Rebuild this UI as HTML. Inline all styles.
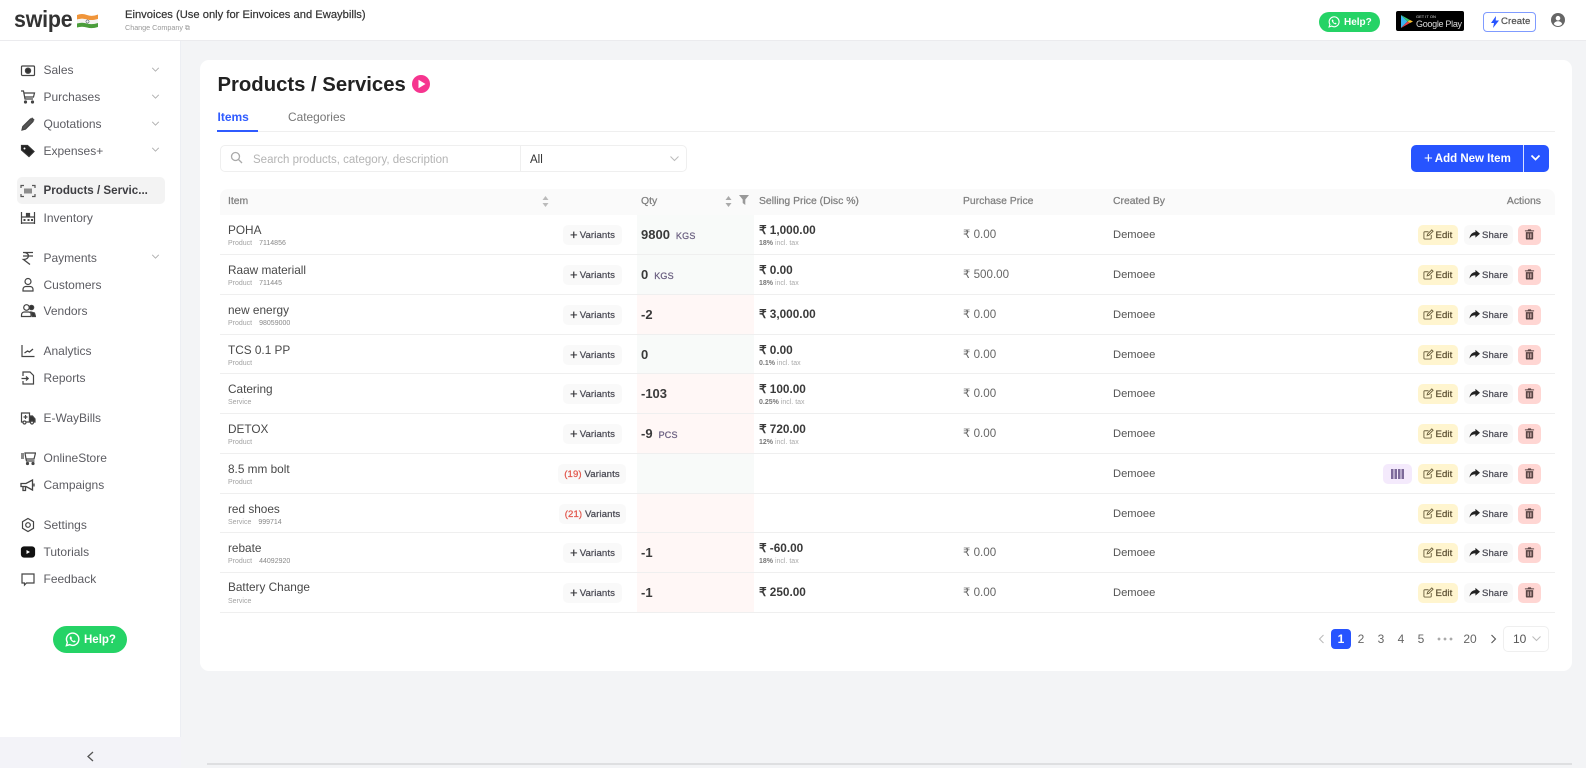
<!DOCTYPE html>
<html lang="en"><head><meta charset="utf-8"><title>Products / Services</title>
<style>
*{box-sizing:border-box}
html,body{margin:0;padding:0;width:1586px;height:768px;overflow:hidden;background:#f3f4f6;font-family:"Liberation Sans",sans-serif;color:#333}
#w{position:absolute;left:0;top:0;width:1586px;height:768px;overflow:hidden;background:#f3f4f6;filter:blur(.3px)}
.a{position:absolute;white-space:nowrap}
#top{position:absolute;left:0;top:0;width:1586px;height:41px;background:#fff;border-bottom:1px solid #ebebee}
#side{position:absolute;left:0;top:41px;width:181px;height:727px;background:#fff;border-right:1px solid #eceef3}
.m{position:absolute;left:43.5px;font-size:12px;line-height:16px;color:#5c5c62;white-space:nowrap}
.i{position:absolute;left:20px;width:16px;height:16px;fill:none;stroke:#444;stroke-width:1.2}
.c{position:absolute;left:151px;width:9px;height:9px;fill:none;stroke:#aaa;stroke-width:1.1}
#card{position:absolute;left:200px;top:60px;width:1372px;height:611px;background:#fff;border-radius:9px}
.r{position:absolute;left:220px;width:1335px;height:40px;border-bottom:1px solid #efefef}
.h39{height:39px}
.q{position:absolute;left:417px;top:0;width:117px;height:100%}
.g{background:#f8faf9}.p{background:#fff7f6}
.n{position:absolute;left:8px;top:8px;font-size:11.8px;line-height:15px;color:#484848;white-space:nowrap}
.s{position:absolute;left:8px;top:24px;font-size:7px;line-height:9px;color:#a2a2a2;white-space:nowrap}
.s b{font-weight:400;margin-left:7px;color:#888}
.v{position:absolute;left:343px;top:10px;width:59px;height:20px;border-radius:5px;background:#f9f9f9;font-size:9.6px;line-height:22px;color:#4b4b55;-webkit-text-stroke:.25px #4b4b55;letter-spacing:.1px;text-align:center;white-space:nowrap}
.v u{text-decoration:none;font-size:13px;line-height:0;margin-right:2px;position:relative;top:1px;color:#333}
.v i{font-style:normal;color:#e2574c;-webkit-text-stroke:.25px #e2574c}
.qt{position:absolute;left:421px;top:12px;font-size:13px;line-height:16px;font-weight:700;color:#3a3a3a;white-space:nowrap}
.qt small{font-size:9px;font-weight:400;-webkit-text-stroke:.25px #6a5f80;color:#6a5f80;margin-left:6px;letter-spacing:.2px}
.pr{position:absolute;left:539px;top:8px;font-size:11.8px;line-height:15px;font-weight:700;color:#3a3a3a;white-space:nowrap}
.pr.o{top:12px}
.tx{position:absolute;left:539px;top:24px;font-size:7px;line-height:9px;color:#aaa;white-space:nowrap}
.tx b{color:#777}
.pu{position:absolute;left:743px;top:12px;font-size:11.6px;line-height:16px;color:#666;white-space:nowrap}
.cb{position:absolute;left:893px;top:12px;font-size:11.2px;line-height:16px;color:#555;white-space:nowrap}
.e,.h,.d,.b{position:absolute;top:10px;height:20px;border-radius:5px;font-size:9.6px;line-height:21px;white-space:nowrap}
.e{left:1198px;width:40px;background:#fff5cf;color:#5f5335;padding-left:17.5px;-webkit-text-stroke:.25px #5f5335;letter-spacing:.1px}
.h{left:1244px;width:49px;background:#f9f9f9;color:#4e4e58;padding-left:18px;-webkit-text-stroke:.25px #4e4e58;letter-spacing:.1px}
.d{left:1298px;width:23px;background:#ffd6d3}
.b{left:1163px;width:29px;background:#f4eafc}
.e svg,.h svg,.d svg,.b svg{position:absolute}
.th{position:absolute;top:6px;font-size:10.4px;line-height:14px;color:#7f7f7f;-webkit-text-stroke:.25px #7f7f7f;white-space:nowrap}
.pg{position:absolute;top:631px;font-size:12px;line-height:16px;color:#666;width:20px;text-align:center}
</style></head><body>
<div id="w">
<svg width="0" height="0" style="position:absolute"><defs>
<symbol id="ed" viewBox="0 0 12 12"><path d="M9 6.5V10a1 1 0 0 1-1 1H2a1 1 0 0 1-1-1V4a1 1 0 0 1 1-1h4" fill="none" stroke="#6b5f3d" stroke-width="1"/><path d="M4.5 7.5l.4-1.8L9.6 1l1.4 1.4-4.7 4.7z" fill="none" stroke="#6b5f3d" stroke-width="1"/></symbol>
<symbol id="sh" viewBox="0 0 12 12"><path d="M7 1l5 4.2L7 9.4V7C4 7 2 7.8.6 10.6.8 6.6 3 3.6 7 3.4z" fill="#222"/></symbol>
<symbol id="tr" viewBox="0 0 12 12"><path d="M4.5 1h3l.5 1h3v1.2H1V2h3zM2 4h8v7a1 1 0 0 1-1 1H3a1 1 0 0 1-1-1zm2 1.5v5h1v-5zm3 0v5h1v-5z" fill="#5a4545" fill-rule="evenodd"/></symbol>
<symbol id="wa" viewBox="0 0 16 16"><path d="M1.5 14.5l1-3.4A6.6 6.6 0 1 1 5 13.5z" fill="none" stroke="#fff" stroke-width="1.5"/><path d="M5.6 4.8c-.8.7-.8 1.8.1 3.2.9 1.5 2.1 2.5 3.5 3 1.1.3 2-.2 2.3-1.1l-1.700-1-.8.7c-.9-.4-1.700-1.200-2.100-2.100l.6-.8-.9-1.900z" fill="#fff"/></symbol>
<symbol id="dn" viewBox="0 0 11 11"><path d="M1.500 3.500l4 4 4-4"/></symbol>
</defs></svg>

<div id="top">
<div class="a" style="left:14px;top:5px;font-size:23px;line-height:28px;font-weight:700;color:#333;transform:scaleX(.93);transform-origin:left;letter-spacing:-.2px">swipe</div>
<svg class="a" style="left:77px;top:13px" width="21" height="16" viewBox="0 0 21 16"><path d="M0 2q5-2 10 0t11-.5V6q-6 2-11 .5T0 6.500z" fill="#f0953a"/><path d="M0 6.500q5-1.500 10 0T21 6v4q-6 2-11 .5T0 10.500z" fill="#f4f4f2"/><path d="M0 10.500q5-1.500 10 0t11-.5v4q-6 2-11 .500T0 14.500z" fill="#4b9d3b"/><circle cx="10.500" cy="8.500" r="1.600" fill="none" stroke="#345" stroke-width=".5"/></svg>
<div class="a" style="left:125px;top:8px;font-size:11.2px;line-height:14px;color:#333;-webkit-text-stroke:.2px #333">Einvoices (Use only for Einvoices and Ewaybills)</div>
<div class="a" style="left:125px;top:23px;font-size:7.2px;line-height:9px;color:#999">Change Company ⧉</div>
<div class="a" style="left:1319px;top:12px;width:61px;height:20px;border-radius:10px;background:#25d366;color:#fff;font-size:10px;font-weight:700;line-height:21px;padding-left:25px">Help?<svg class="a" style="left:9px;top:4px" width="12" height="12"><use href="#wa"/></svg></div>
<div class="a" style="left:1396px;top:11px;width:68px;height:20px;border-radius:2px;background:#000;color:#ddd"><svg class="a" style="left:5px;top:3.5px" width="12" height="13" viewBox="0 0 12 13"><path d="M0 0l6.500 6.500L0 13z" fill="#3cb4f0"/><path d="M0 0l9 5-2.500 1.500z" fill="#36c46a"/><path d="M0 13l9-5-2.500-1.500z" fill="#e8404a"/><path d="M9 5l3 1.500L9 8 6.500 6.500z" fill="#fbc02d"/></svg><span class="a" style="left:20px;top:3px;font-size:4px;line-height:5px">GET IT ON</span><span class="a" style="left:20px;top:7.5px;font-size:9px;line-height:11px;letter-spacing:-.3px">Google Play</span></div>
<div class="a" style="left:1483px;top:12px;width:53px;height:20px;border-radius:4px;background:#fff;border:1px solid #7f9bff;color:#555;font-size:9.6px;-webkit-text-stroke:.25px #555;line-height:18px;padding-left:17px;letter-spacing:.1px">Create<svg class="a" style="left:7px;top:3px" width="8" height="12" viewBox="0 0 8 12"><path d="M5 0L0 7h3l-1 5 6-7.500H4.700z" fill="#2754ff"/></svg></div>
<svg class="a" style="left:1551px;top:13px" width="14" height="14" viewBox="0 0 14 14"><circle cx="7" cy="7" r="7" fill="#666"/><circle cx="7" cy="5.200" r="2.300" fill="#fff"/><path d="M2.800 11c.8-2 2.400-2.700 4.200-2.700s3.400.7 4.200 2.700A6 6 0 0 1 7 13a6 6 0 0 1-4.200-2z" fill="#fff"/></svg>
</div>

<div id="side"></div>
<div class="a" style="left:17px;top:177px;width:148px;height:27px;background:#f3f3f3;border-radius:5px"></div>
<div class="m" style="top:62px">Sales</div>
<div class="m" style="top:89px">Purchases</div>
<div class="m" style="top:116px">Quotations</div>
<div class="m" style="top:143px">Expenses+</div>
<div class="m" style="top:183px;font-weight:700;color:#3e3e42;font-size:11.6px">Products / Servic...</div>
<div class="m" style="top:210px">Inventory</div>
<div class="m" style="top:250px">Payments</div>
<div class="m" style="top:277px">Customers</div>
<div class="m" style="top:303px">Vendors</div>
<div class="m" style="top:343px">Analytics</div>
<div class="m" style="top:370px">Reports</div>
<div class="m" style="top:410px">E-WayBills</div>
<div class="m" style="top:450px">OnlineStore</div>
<div class="m" style="top:477px">Campaigns</div>
<div class="m" style="top:517px">Settings</div>
<div class="m" style="top:544px">Tutorials</div>
<div class="m" style="top:571px">Feedback</div>

<svg class="c" style="top:65px"><use href="#dn"/></svg>
<svg class="c" style="top:92px"><use href="#dn"/></svg>
<svg class="c" style="top:119px"><use href="#dn"/></svg>
<svg class="c" style="top:145px"><use href="#dn"/></svg>
<svg class="c" style="top:252px"><use href="#dn"/></svg>

<svg class="i" style="top:63px" viewBox="0 0 16 16"><rect x="1.500" y="3" width="13" height="9.500" rx="1"/><circle cx="8" cy="7.700" r="2.600" fill="#333"/></svg>
<svg class="i" style="top:89px" viewBox="0 0 16 16"><path d="M1 2h2.500l1.500 8h8M4 4h10.500l-1 4H4.700"/><circle cx="5.500" cy="13" r="1" fill="#444"/><circle cx="12.500" cy="13" r="1" fill="#444"/></svg>
<svg class="i" style="top:116px" viewBox="0 0 16 16"><path d="M2 14l.8-3.500L10.500 3l2.500 2.500-7.500 7.600z" fill="#555"/><path d="M11.500 2l2.500 2.500" stroke-width="1.800"/></svg>
<svg class="i" style="top:143px" viewBox="0 0 16 16"><path d="M1.500 2.500h6l6.500 6-5 5-7.500-6.500z" fill="#222" stroke="#333"/><circle cx="4.500" cy="5.500" r="1" fill="#fff" stroke="none"/></svg>
<svg class="i" style="top:183px;stroke:#555" viewBox="0 0 16 16"><path d="M1 5V2.500h3M12 2.500h3V5M1 11v2.500h3M12 13.500h3V11"/><path d="M5 5.500v5M7 5.500v5M9 5.500v5M11 5.500v5" stroke-width="1.300"/></svg>
<svg class="i" style="top:210px" viewBox="0 0 16 16"><path d="M1.500 2v12M14.500 2v12M1.500 7h13M1.500 13h13"/><rect x="6.500" y="3.500" width="3" height="3" fill="#444"/><path d="M3.500 10h2M7.500 10h2M11 10h2" stroke-width="2"/></svg>
<svg class="i" style="top:250px" viewBox="0 0 16 16"><path d="M3 2.500h10M3 6h10M4 2.500c6 0 6 7-.5 7l6.500 5" stroke-width="1.300"/></svg>
<svg class="i" style="top:277px" viewBox="0 0 16 16"><circle cx="8" cy="4.500" r="3"/><path d="M3 14v-1.500C3 10.500 4.500 9.500 6 9.500h4c1.500 0 3 1 3 3V14z"/></svg>
<svg class="i" style="top:303px" viewBox="0 0 16 16"><circle cx="6.500" cy="4.500" r="2.800"/><path d="M1.500 13.500v-1.500c0-2 1.500-3 3-3h4c1 0 2 .5 2.500 1.500v3z"/><circle cx="11.500" cy="4.500" r="2.200" fill="#333"/><path d="M11 9l3.500 1 1 3.500h-3z" fill="#333"/></svg>
<svg class="i" style="top:343px" viewBox="0 0 16 16"><path d="M2 2v11.500h12.500"/><path d="M4.500 10l3-2 2 1 3.500-3" stroke-width="1.300"/></svg>
<svg class="i" style="top:370px" viewBox="0 0 16 16"><path d="M3 6V2h7l3.500 3.500V14H3v-3"/><path d="M1.500 8.500H8M6 6.500l2.200 2-2.200 2"/></svg>
<svg class="i" style="top:410px" viewBox="0 0 16 16"><path d="M1.500 3h8v9h-8z"/><path d="M9.500 6h3l2.500 3v3h-5.500z" fill="#333"/><circle cx="4.500" cy="12.500" r="1.500" fill="#fff"/><circle cx="12" cy="12.500" r="1.500" fill="#fff"/><path d="M5.500 5v4M3.500 7h4"/></svg>
<svg class="i" style="top:450px" viewBox="0 0 16 16"><path d="M5 3h10.500l-1.500 6H6zM6 9l.5 2h8M1 4h3M1 6h3M1 8h3"/><circle cx="7.500" cy="13.500" r="1" fill="#444"/><circle cx="13" cy="13.500" r="1" fill="#444"/></svg>
<svg class="i" style="top:477px" viewBox="0 0 16 16"><path d="M1 6.500h5L12.500 3v10L6 9.500H1zM3 9.500v4h2.500V9.500M14 6.500v3" stroke-width="1.300"/></svg>
<svg class="i" style="top:517px" viewBox="0 0 16 16"><path d="M8 1.500l5.500 3.200v6.600L8 14.500l-5.500-3.200V4.700z"/><circle cx="8" cy="8" r="2.300"/></svg>
<svg class="i" style="top:544px" viewBox="0 0 16 16"><rect x="1.500" y="3" width="13" height="10" rx="2.500" fill="#111" stroke="#111"/><path d="M6.500 6l3.500 2-3.500 2z" fill="#fff" stroke="none"/></svg>
<svg class="i" style="top:571px" viewBox="0 0 16 16"><path d="M2 3h12v9H6.500L4.500 14v-2H2z"/></svg>

<div class="a" style="left:53px;top:626px;width:74px;height:27px;border-radius:14px;background:#25d366;color:#fff;font-size:11.5px;font-weight:700;line-height:29px;padding-left:31px">Help?<svg class="a" style="left:12px;top:6px" width="15" height="15"><use href="#wa"/></svg></div>
<div class="a" style="left:0;top:737px;width:181px;height:31px;background:#f3f3f8"></div>
<svg class="a" style="left:86px;top:751px" width="9" height="11" viewBox="0 0 9 11"><path d="M7 1L2 5.500 7 10" fill="none" stroke="#555" stroke-width="1.300"/></svg>
<div class="a" style="left:207px;top:763px;width:1365px;height:2px;background:#dedfe1"></div>

<div id="card"></div>
<div class="a" style="left:217.5px;top:73px;font-size:20.3px;line-height:24px;font-weight:700;color:#222">Products / Services</div>
<svg class="a" style="left:412px;top:75px" width="18" height="18" viewBox="0 0 18 18"><circle cx="9" cy="9" r="9" fill="#f6358f"/><path d="M6.500 4.800l7 4.200-7 4.200z" fill="#fff"/></svg>
<div class="a" style="left:217.5px;top:109px;font-size:12px;line-height:16px;font-weight:700;color:#2f5bff">Items</div>
<div class="a" style="left:288px;top:109px;font-size:11.9px;line-height:16px;color:#777">Categories</div>
<div class="a" style="left:217px;top:131px;width:1338px;height:1px;background:#efefef"></div>
<div class="a" style="left:217px;top:130px;width:41px;height:2px;background:#2f5bff"></div>

<div class="a" style="left:220px;top:145px;width:467px;height:27px;border:1px solid #efefef;border-radius:5px;background:#fff"></div>
<div class="a" style="left:520px;top:146px;width:1px;height:25px;background:#efefef"></div>
<svg class="a" style="left:230px;top:151px" width="13" height="13" viewBox="0 0 13 13" fill="none" stroke="#aaa" stroke-width="1.300"><circle cx="5.500" cy="5.500" r="4"/><path d="M8.500 8.500L12 12"/></svg>
<div class="a" style="left:253px;top:153px;font-size:11.5px;line-height:15px;color:#b4b4b4">Search products, category, description</div>
<div class="a" style="left:530px;top:153px;font-size:11.5px;line-height:15px;color:#333">All</div>
<svg class="a" style="left:669px;top:153px;stroke:#bbb;fill:none" width="11" height="11"><use href="#dn"/></svg>

<div class="a" style="left:1411px;top:145px;width:138px;height:27px;background:#2754ff;border-radius:5px"></div>
<div class="a" style="left:1523px;top:145px;width:1px;height:27px;background:#d8e0ff"></div>
<div class="a" style="left:1424px;top:152px;font-size:11.5px;line-height:15px;font-weight:700;color:#fff"><span style="font-size:15px;line-height:0;font-weight:400;position:relative;top:1px;margin-right:2px">+</span>Add New Item</div>
<svg class="a" style="left:1530px;top:152px;stroke:#fff;stroke-width:1.7;fill:none" width="11" height="11"><use href="#dn"/></svg>

<div class="a" style="left:220px;top:189px;width:1335px;height:26px;background:#fafafa;border-radius:8px 8px 0 0">
<span class="th" style="left:8px">Item</span>
<span class="th" style="left:421px">Qty</span>
<span class="th" style="left:539px">Selling Price (Disc %)</span>
<span class="th" style="left:743px">Purchase Price</span>
<span class="th" style="left:893px">Created By</span>
<span class="th" style="right:14px">Actions</span>
<svg class="a" style="left:322px;top:7px" width="7" height="11" viewBox="0 0 7 11" fill="#bbb"><path d="M3.500 0L6.500 4H.5zM3.500 11L.5 7h6z"/></svg>
<svg class="a" style="left:505px;top:7px" width="7" height="11" viewBox="0 0 7 11" fill="#aaa"><path d="M3.500 0L6.500 4H.5zM3.500 11L.5 7h6z"/></svg>
<svg class="a" style="left:519px;top:6px" width="10" height="10" viewBox="0 0 10 10" fill="#999"><path d="M0 0h10L6.300 4.500V10L3.700 8V4.500z"/></svg>
</div>

<div class="r" style="top:215px"><div class="q g"></div><div class="n">POHA</div><div class="s">Product<b>7114856</b></div><div class="v"><u>+</u>Variants</div><div class="qt">9800<small>KGS</small></div><div class="pr">₹ 1,000.00</div><div class="tx"><b>18%</b> incl. tax</div><div class="pu">₹ 0.00</div><div class="cb">Demoee</div><div class="e"><svg style="left:5px;top:4px" width="11" height="11"><use href="#ed"/></svg>Edit</div><div class="h"><svg style="left:5px;top:4px" width="11" height="11"><use href="#sh"/></svg>Share</div><div class="d"><svg style="left:6px;top:3px" width="11" height="12"><use href="#tr"/></svg></div></div>

<div class="r" style="top:255px"><div class="q g"></div><div class="n">Raaw materiall</div><div class="s">Product<b>711445</b></div><div class="v"><u>+</u>Variants</div><div class="qt">0<small>KGS</small></div><div class="pr">₹ 0.00</div><div class="tx"><b>18%</b> incl. tax</div><div class="pu">₹ 500.00</div><div class="cb">Demoee</div><div class="e"><svg style="left:5px;top:4px" width="11" height="11"><use href="#ed"/></svg>Edit</div><div class="h"><svg style="left:5px;top:4px" width="11" height="11"><use href="#sh"/></svg>Share</div><div class="d"><svg style="left:6px;top:3px" width="11" height="12"><use href="#tr"/></svg></div></div>

<div class="r" style="top:295px"><div class="q p"></div><div class="n">new energy</div><div class="s">Product<b>98059000</b></div><div class="v"><u>+</u>Variants</div><div class="qt">-2</div><div class="pr o">₹ 3,000.00</div><div class="pu">₹ 0.00</div><div class="cb">Demoee</div><div class="e"><svg style="left:5px;top:4px" width="11" height="11"><use href="#ed"/></svg>Edit</div><div class="h"><svg style="left:5px;top:4px" width="11" height="11"><use href="#sh"/></svg>Share</div><div class="d"><svg style="left:6px;top:3px" width="11" height="12"><use href="#tr"/></svg></div></div>

<div class="r h39" style="top:335px"><div class="q g"></div><div class="n">TCS 0.1 PP</div><div class="s">Product</div><div class="v"><u>+</u>Variants</div><div class="qt">0</div><div class="pr">₹ 0.00</div><div class="tx"><b>0.1%</b> incl. tax</div><div class="pu">₹ 0.00</div><div class="cb">Demoee</div><div class="e"><svg style="left:5px;top:4px" width="11" height="11"><use href="#ed"/></svg>Edit</div><div class="h"><svg style="left:5px;top:4px" width="11" height="11"><use href="#sh"/></svg>Share</div><div class="d"><svg style="left:6px;top:3px" width="11" height="12"><use href="#tr"/></svg></div></div>

<div class="r" style="top:374px"><div class="q p"></div><div class="n">Catering</div><div class="s">Service</div><div class="v"><u>+</u>Variants</div><div class="qt">-103</div><div class="pr">₹ 100.00</div><div class="tx"><b>0.25%</b> incl. tax</div><div class="pu">₹ 0.00</div><div class="cb">Demoee</div><div class="e"><svg style="left:5px;top:4px" width="11" height="11"><use href="#ed"/></svg>Edit</div><div class="h"><svg style="left:5px;top:4px" width="11" height="11"><use href="#sh"/></svg>Share</div><div class="d"><svg style="left:6px;top:3px" width="11" height="12"><use href="#tr"/></svg></div></div>

<div class="r" style="top:414px"><div class="q p"></div><div class="n">DETOX</div><div class="s">Product</div><div class="v"><u>+</u>Variants</div><div class="qt">-9<small>PCS</small></div><div class="pr">₹ 720.00</div><div class="tx"><b>12%</b> incl. tax</div><div class="pu">₹ 0.00</div><div class="cb">Demoee</div><div class="e"><svg style="left:5px;top:4px" width="11" height="11"><use href="#ed"/></svg>Edit</div><div class="h"><svg style="left:5px;top:4px" width="11" height="11"><use href="#sh"/></svg>Share</div><div class="d"><svg style="left:6px;top:3px" width="11" height="12"><use href="#tr"/></svg></div></div>

<div class="r" style="top:454px"><div class="q g"></div><div class="n">8.5 mm bolt</div><div class="s">Product</div><div class="v" style="left:338px;width:68px"><i>(19)</i> Variants</div><div class="cb">Demoee</div><div class="b"><svg style="left:8px;top:5px" width="13" height="10" viewBox="0 0 13 10" fill="#7d6a9a"><path d="M0 0h2.500v10H0zM3.500 0H6v10H3.500zM7 0h2.500v10H7zM10.500 0H13v10h-2.500z"/></svg></div><div class="e"><svg style="left:5px;top:4px" width="11" height="11"><use href="#ed"/></svg>Edit</div><div class="h"><svg style="left:5px;top:4px" width="11" height="11"><use href="#sh"/></svg>Share</div><div class="d"><svg style="left:6px;top:3px" width="11" height="12"><use href="#tr"/></svg></div></div>

<div class="r h39" style="top:494px"><div class="q p"></div><div class="n">red shoes</div><div class="s">Service<b>999714</b></div><div class="v" style="left:339px;width:67px"><i>(21)</i> Variants</div><div class="cb">Demoee</div><div class="e"><svg style="left:5px;top:4px" width="11" height="11"><use href="#ed"/></svg>Edit</div><div class="h"><svg style="left:5px;top:4px" width="11" height="11"><use href="#sh"/></svg>Share</div><div class="d"><svg style="left:6px;top:3px" width="11" height="12"><use href="#tr"/></svg></div></div>

<div class="r" style="top:533px"><div class="q p"></div><div class="n">rebate</div><div class="s">Product<b>44092920</b></div><div class="v"><u>+</u>Variants</div><div class="qt">-1</div><div class="pr">₹ -60.00</div><div class="tx"><b>18%</b> incl. tax</div><div class="pu">₹ 0.00</div><div class="cb">Demoee</div><div class="e"><svg style="left:5px;top:4px" width="11" height="11"><use href="#ed"/></svg>Edit</div><div class="h"><svg style="left:5px;top:4px" width="11" height="11"><use href="#sh"/></svg>Share</div><div class="d"><svg style="left:6px;top:3px" width="11" height="12"><use href="#tr"/></svg></div></div>

<div class="r" style="top:573px"><div class="q p"></div><div class="n" style="top:7px">Battery Change</div><div class="s">Service</div><div class="v"><u>+</u>Variants</div><div class="qt">-1</div><div class="pr o">₹ 250.00</div><div class="pu">₹ 0.00</div><div class="cb">Demoee</div><div class="e"><svg style="left:5px;top:4px" width="11" height="11"><use href="#ed"/></svg>Edit</div><div class="h"><svg style="left:5px;top:4px" width="11" height="11"><use href="#sh"/></svg>Share</div><div class="d"><svg style="left:6px;top:3px" width="11" height="12"><use href="#tr"/></svg></div></div>

<svg class="a" style="left:1318px;top:634px" width="7" height="10" viewBox="0 0 7 10"><path d="M5.500 1L1.500 5l4 4" fill="none" stroke="#bbb" stroke-width="1.100"/></svg>
<div class="a" style="left:1331px;top:629px;width:20px;height:20px;border-radius:4px;background:#2754ff"></div>
<div class="pg" style="left:1331px;color:#fff;font-weight:700">1</div>
<div class="pg" style="left:1351px">2</div>
<div class="pg" style="left:1371px">3</div>
<div class="pg" style="left:1391px">4</div>
<div class="pg" style="left:1411px">5</div>
<div class="a" style="left:1437px;top:637px;width:16px;height:4px;background:radial-gradient(circle at 2px 2px,#aaa 1.300px,transparent 1.500px) 0 0/6px 4px"></div>
<div class="pg" style="left:1460px">20</div>
<svg class="a" style="left:1490px;top:634px" width="7" height="10" viewBox="0 0 7 10"><path d="M1.500 1l4 4-4 4" fill="none" stroke="#555" stroke-width="1.100"/></svg>
<div class="a" style="left:1503px;top:626px;width:46px;height:26px;border:1px solid #efefef;border-radius:5px;background:#fff;font-size:12px;line-height:24px;color:#555;padding-left:9px">10</div>
<svg class="a" style="left:1531px;top:633px;stroke:#bbb;fill:none" width="11" height="11"><use href="#dn"/></svg>
</div>
</body></html>
